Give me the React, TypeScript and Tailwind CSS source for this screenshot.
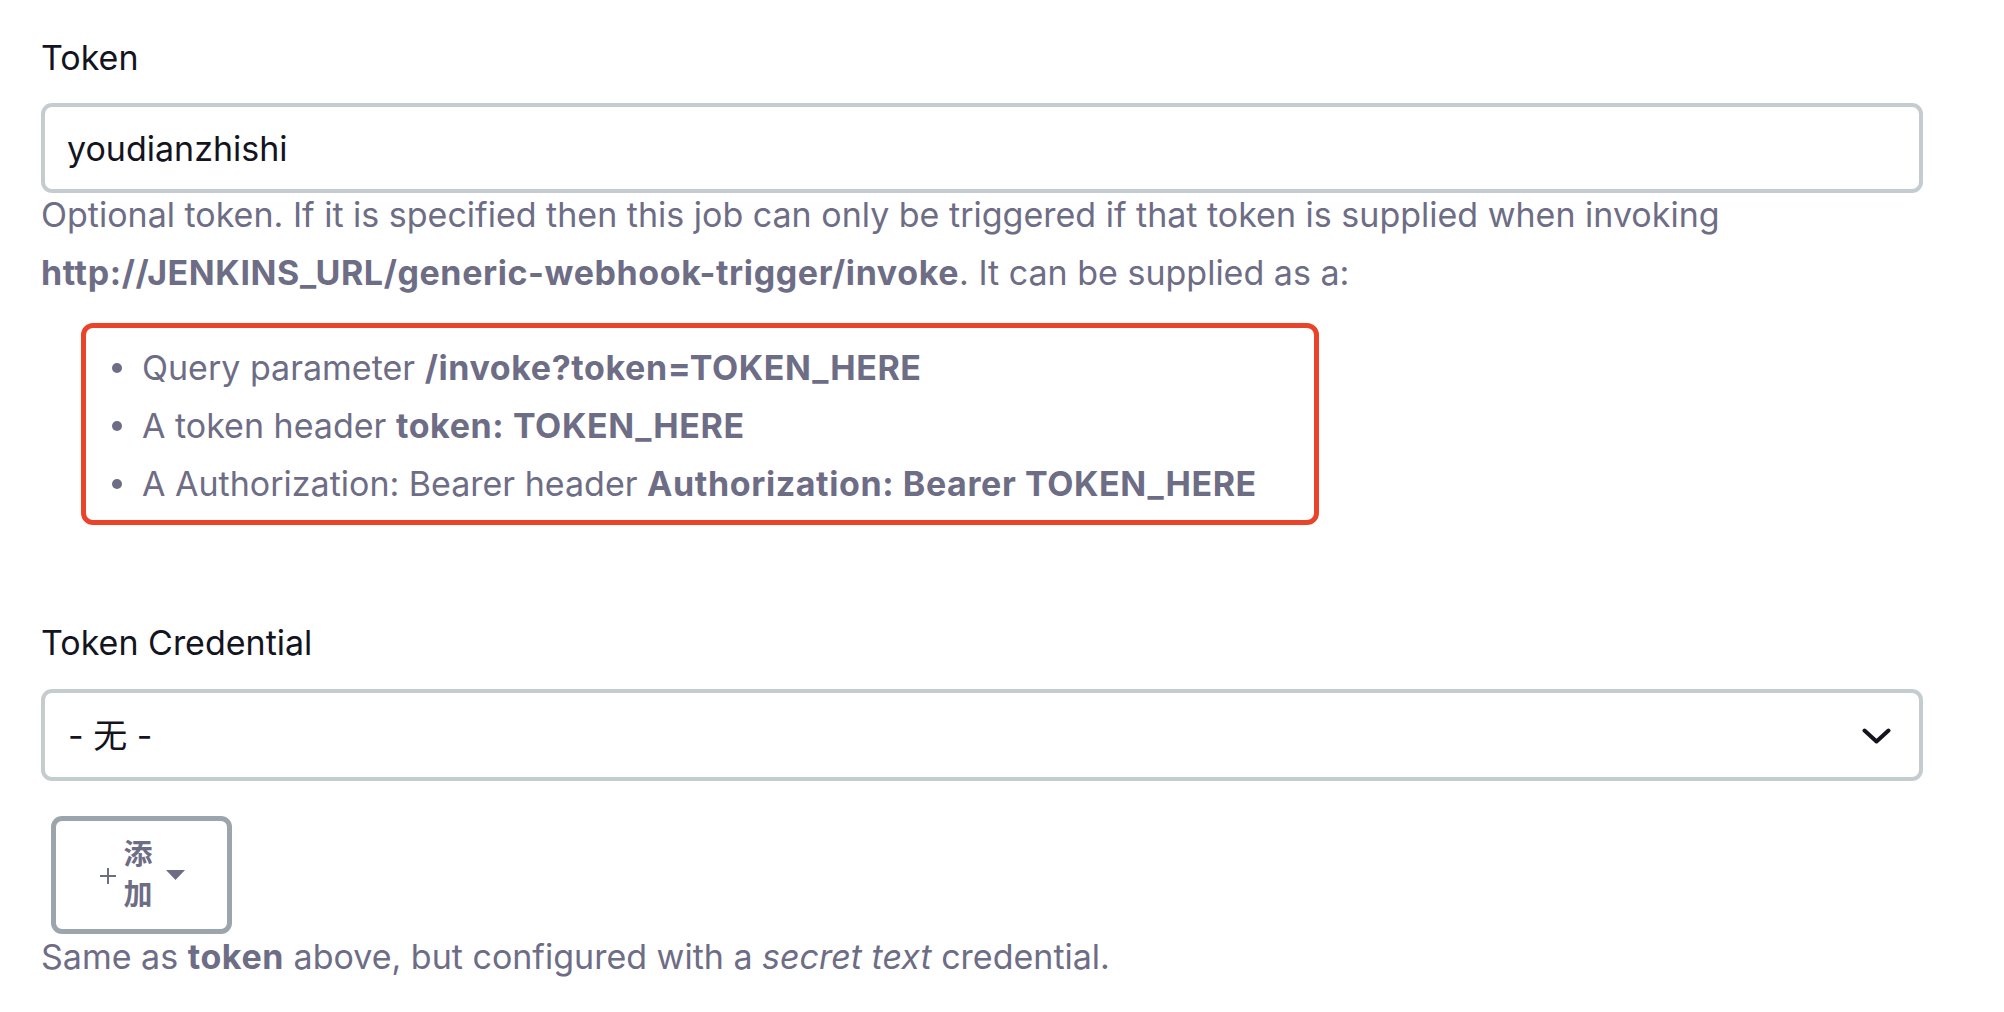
export default function App() {
  return (
    <div className="min-h-screen bg-white pt-[37px] pl-[41px] pr-[81px] font-['Inter','Noto_Sans_CJK_SC',sans-serif] text-[34px]">
      <label className="block leading-[42px] text-[#14141f]">Token</label>
      <input
        readOnly
        value="youdianzhishi"
        className="mt-[24px] block w-full h-[90px] rounded-[11px] border-4 border-[#c5ccd0] px-[22px] text-[#14141f] outline-none"
      />
      <div className="-mt-[7px] leading-[58px] text-[#6e6d86]">
        Optional token. If it is specified then this job can only be triggered if that token is supplied when
        invoking <b className="font-bold tracking-[0.6px]">http://JENKINS_URL/generic-webhook-trigger/invoke</b>. It can be
        supplied as a:
      </div>

      <ul className="mt-[21px] ml-[40px] w-[1238px] rounded-[12px] border-[5px] border-[#e94429] pt-[11px] pb-[7px] pl-[26px] text-[#6e6d86]">
        <li className="flex items-center gap-[20px] leading-[58px]">
          <span className="w-[10px] h-[10px] rounded-full bg-[#6e6d86]" />
          <span>
            Query parameter <b className="font-bold tracking-[0.6px]">/invoke?token=TOKEN_HERE</b>
          </span>
        </li>
        <li className="flex items-center gap-[20px] leading-[58px]">
          <span className="w-[10px] h-[10px] rounded-full bg-[#6e6d86]" />
          <span>
            A token header <b className="font-bold tracking-[0.6px]">token: TOKEN_HERE</b>
          </span>
        </li>
        <li className="flex items-center gap-[20px] leading-[58px]">
          <span className="w-[10px] h-[10px] rounded-full bg-[#6e6d86]" />
          <span>
            A Authorization: Bearer header <b className="font-bold tracking-[0.6px]">Authorization: Bearer TOKEN_HERE</b>
          </span>
        </li>
      </ul>

      <label className="mt-[97px] block leading-[42px] text-[#14141f]">Token Credential</label>
      <div className="mt-[25px] flex h-[92px] items-center justify-between rounded-[11px] border-4 border-[#c5ccd0] pl-[23px] pr-[28px] text-[#14141f]">
        <span>- 无 -</span>
        <svg width="29" height="16" viewBox="0 0 29 16" fill="none" className="mt-[2px]">
          <path d="M2.5 2.5 L14.5 13.5 L26.5 2.5" stroke="#14141f" strokeWidth="4" strokeLinecap="round" strokeLinejoin="round" />
        </svg>
      </div>

      <button className="mt-[35px] ml-[10px] flex h-[118px] w-[181px] items-center justify-center rounded-[11px] border-[5px] border-[#9ca5ab] bg-white text-[#6e6d86]">
        <svg width="18" height="18" viewBox="0 0 18 18" fill="none" className="mt-[2px]">
          <path d="M9 1 V17 M1 9 H17" stroke="#6e6d86" strokeWidth="2" />
        </svg>
        <span className="ml-[7px] w-[29px] text-[29px] leading-[40px] font-semibold break-all">添加</span>
        <svg width="19" height="10" viewBox="0 0 19 10" className="ml-[13px]">
          <path d="M0 0 H19 L9.5 10 Z" fill="#6e6d86" />
        </svg>
      </button>

      <div className="-mt-[6px] leading-[58px] text-[#6e6d86]">
        Same as <b className="font-bold tracking-[0.6px]">token</b> above, but configured with a <i>secret text</i> credential.
      </div>
    </div>
  );
}
